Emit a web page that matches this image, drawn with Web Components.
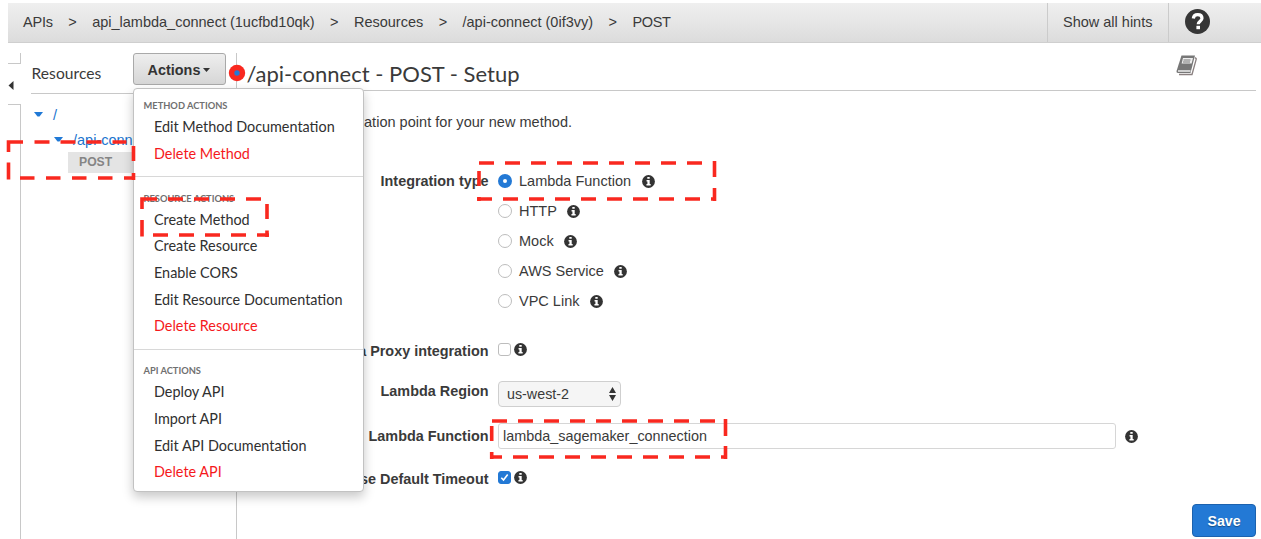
<!DOCTYPE html>
<html lang="en">
<head>
<meta charset="utf-8">
<title>API Gateway - Method Setup</title>
<style>
html, body { margin: 0; height: 100%; overflow: hidden; background: #fff; }
body { font: 14.5px/20px "Liberation Sans", Arial, sans-serif; color: #3a3a3a; }
</style>
</head>
<body>
<gateway-app></gateway-app>
<script>
function define(name, html, setup) {
  const template = document.createElement('template');
  template.innerHTML = html;
  customElements.define(name, class extends HTMLElement {
    connectedCallback() {
      if (this.shadowRoot) return;
      const root = this.attachShadow({ mode: 'open' });
      root.append(template.content.cloneNode(true));
      if (setup) setup(this, root);
    }
  });
}

define('info-icon', `
<style>:host{display:block;width:13px;height:13px;flex:none} svg{display:block}</style>
<svg width="13" height="13" viewBox="0 0 12 12"><circle cx="6" cy="6" r="5.900" fill="#333"/>
<path d="M4.9 1.8h2.2v1.7H4.9zM4.2 4.6h2.9v3.7h.9v1.4H4.1V8.3H5V6h-.8z" fill="#fff"/></svg>`);

define('crumb-bar', `
<style>
:host{display:flex;box-sizing:border-box;height:40px;margin:3px 0 0 8px;border-bottom:1px solid #cfcfcf;background:linear-gradient(#efefef,#e7e7e7 45%,#dcdcdc)}
nav{display:flex;flex:1;padding:8.500px 0 0 15px;white-space:pre}
.sep{width:39.300px;text-align:center}
.hints{box-sizing:border-box;width:122px;padding:8.500px 0 0 15px;border-left:1px solid #cbcbcb;border-right:1px solid #cbcbcb;white-space:nowrap}
.help{width:92px;padding:5.5px 0 0 16px;box-sizing:border-box}
svg{display:block}
</style>
<nav><span style="letter-spacing:-.2px">APIs</span><span class="sep">&gt;</span><span>api_lambda_connect (1ucfbd10qk)</span><span class="sep">&gt;</span><span>Resources</span><span class="sep">&gt;</span><span>/api-connect (0if3vy)</span><span class="sep">&gt;</span><span style="letter-spacing:-.3px">POST</span></nav>
<div class="hints">Show all hints</div>
<div class="help"><svg width="25" height="25" viewBox="0 0 25 25"><circle cx="12.5" cy="12.5" r="12.5" fill="#363636"/><path d="M8.3 9.5C8.6 6.8 10.3 5.600 12.700 5.600c2.600 0 4.300 1.400 4.300 3.600 0 3-3.800 3-3.800 6" fill="none" stroke="#fff" stroke-width="3.200"/><rect x="11.400" y="16.800" width="3.600" height="3.400" fill="#fff"/></svg></div>`);

define('collapse-rail', `
<style>
:host{display:flex;flex-direction:column;width:13px;flex:none}
.top,.bottom{box-sizing:border-box;border-right:1px solid #c8c8c8}
.top{height:11px;border-bottom:1px solid #c8c8c8}
.toggle{height:40px;padding-top:17px;box-sizing:border-box}
.bottom{flex:1;border-top:1px solid #c8c8c8}
svg{display:block}
</style>
<div class="top"></div><div class="toggle"><svg width="6" height="9"><path d="M5.500 0v9L.5 4.500z" fill="#333"/></svg></div><div class="bottom"></div>`);

define('tree-row', `
<style>:host{display:flex;align-items:center;height:25px;color:#1b74ce;white-space:nowrap} svg{flex:none;margin-right:10px}</style>
<svg width="9" height="5"><path d="M0 0h9L5.500 4.600h-2z" fill="#2079d6"/></svg><slot></slot>`);

define('resource-panel', `
<style>
:host{display:block;width:205px;margin-left:10px;flex:none;overflow:hidden}
header{box-sizing:border-box;height:41px;padding:10px 0 0 .5px;border-bottom:1px solid #c8c8c8;font:15.600px/20px Lato,sans-serif;letter-spacing:.05px}
.tree{padding:8px 0 0 3px}
.node2{margin-left:20px}
.method{box-sizing:border-box;margin:0 0 0 34px;height:21px;padding:0 0 0 11px;font:bold 12.200px/20px "Liberation Sans",Arial,sans-serif;color:#858585;background:#e4e4e4}
</style>
<header>Resources</header>
<div class="tree"><tree-row>/</tree-row><tree-row class="node2">/api-connect</tree-row><div class="method">POST</div></div>`);

define('radio-option', `
<style>
:host{display:flex;align-items:center;height:30px;white-space:nowrap}
i{box-sizing:border-box;width:14px;height:14px;border:1px solid #bdbdbd;border-radius:50%;margin-right:7px;background:#fff}
:host([checked]) i{border:5px solid #2379d5}
info-icon{margin-left:10.500px}
</style><i></i><span><slot></slot></span><info-icon></info-icon>`);

define('check-box', `
<style>
:host{display:flex;align-items:center;gap:3px;height:16px}
span{box-sizing:border-box;width:13px;height:13px;border:1px solid #bdbdbd;border-radius:3px;background:#fff}
svg{display:none}
:host([checked]) span{background:#2379d5;border-color:#2379d5}
:host([checked]) svg{display:block}
</style><span><svg width="11" height="11" viewBox="0 0 11 11"><path d="M2.300 5.700 4.500 8 8.700 2.500" fill="none" stroke="#fff" stroke-width="1.600"/></svg></span><info-icon></info-icon>`);

define('form-row', `
<style>
:host{display:grid;grid-template-columns:251.500px 1fr;column-gap:9.500px;align-items:start}
.label{text-align:right;font-weight:bold;font-size:14.400px;white-space:nowrap}
:host([boxed]) .label{padding-top:3px}
</style><div class="label"><slot name="label"></slot></div><slot></slot>`);

define('setup-form', `
<style>
:host{display:block;flex:1;min-width:0;border-left:1px solid #c8c8c8;position:relative}
header{display:flex;justify-content:space-between;box-sizing:border-box;height:38px;margin-right:5px;padding-left:9.500px;border-bottom:1px solid #c8c8c8;font:22px/41px Lato,sans-serif}
header svg{margin:1px 58px 0 0}
p{margin:20.500px 0 0 12px;white-space:nowrap;letter-spacing:.03px}
.types{margin-top:-5px}
.type-row{margin-top:39.500px}
.proxy{margin-top:25px}
.region{margin-top:20px}
.func{margin-top:16px}
.time{margin-top:20px}
.select{box-sizing:border-box;width:123px;height:26px;display:flex;align-items:center;justify-content:space-between;padding:0 4px 0 8px;border:1px solid #cfcfcf;border-radius:4px;background:#f5f5f5;font-size:14.300px}
.input-line{display:flex;align-items:center;gap:9px}
.input{box-sizing:border-box;width:618px;height:26px;padding:2px 4px;border:1px solid #d6d6d6;border-radius:3px;font-size:14.400px}
.actions{display:flex;justify-content:flex-end;margin:15px 5px 0 0}
button{box-sizing:border-box;width:64px;height:33px;border:1px solid #1c62ae;border-radius:4px;background:#2379d5;color:#fff;font:bold 14.200px/20px "Liberation Sans",Arial,sans-serif;padding:0;text-shadow:0 1px 1px #174c85}
</style>
<header><span>/api-connect - POST - Setup</span>
<svg width="23" height="23" viewBox="0 0 23 23"><path d="M6.500 1.500h13.500L15.500 19H3.200Q1 19 1.700 16.500z" fill="#777"/><path d="M20.200 3.500 21.300 5 17 20.500H4" fill="none" stroke="#8a8080" stroke-width="1.300"/><path d="M8 4h10l-1.400 5.500H6.600z" fill="#eee"/><path d="M8.500 6h7M8 8h7" stroke="#777"/><path d="M3 17h12.500" stroke="#eee" stroke-width="1.500"/></svg></header>
<p>Choose the integration point for your new method.</p>
<form-row class="type-row"><span slot="label">Integration type</span><div class="types"><radio-option checked>Lambda Function</radio-option><radio-option>HTTP</radio-option><radio-option>Mock</radio-option><radio-option>AWS Service</radio-option><radio-option>VPC Link</radio-option></div></form-row>
<form-row class="proxy"><span slot="label">Use Lambda Proxy integration</span><check-box></check-box></form-row>
<form-row class="region"><span slot="label">Lambda Region</span><div class="select"><span>us-west-2</span><svg width="7" height="14"><path d="M0 6 3.500 0 7 6zM0 8h7L3.500 14z" fill="#333"/></svg></div></form-row>
<form-row class="func" boxed><span slot="label">Lambda Function</span><div class="input-line"><div class="input">lambda_sagemaker_connection</div><info-icon></info-icon></div></form-row>
<form-row class="time"><span slot="label">Use Default Timeout</span><check-box checked></check-box></form-row>
<div class="actions"><button>Save</button></div>`);

define('menu-item', `
<style>:host{display:block;height:26.700px;padding-left:20.500px;font:14.400px/26.700px Lato,sans-serif;color:#303030;white-space:nowrap} :host([danger]){color:#f5191c}</style><slot></slot>`);

define('menu-group', `
<style>
:host{display:block;padding-bottom:8.800px}
:host(:not(:first-child)){border-top:1px solid #d8d8d8;padding-top:13.400px}
h3{margin:0;padding-left:10px;font:bold 9.300px/16px Lato,sans-serif;color:#707070}
</style><h3></h3><slot></slot>`, (el, root) => { root.querySelector('h3').textContent = el.getAttribute('heading'); });

define('actions-menu', `
<style>
:host{position:absolute;left:132.500px;top:53px;width:232px;z-index:2}
button{display:flex;align-items:center;justify-content:center;gap:3px;box-sizing:border-box;width:93px;height:32px;padding:1px 0 0;border:1px solid #a9a9a9;border-radius:3px;background:linear-gradient(#eee,#d6d6d6);color:#333;font:bold 14.400px/20px "Liberation Sans",Arial,sans-serif}
.menu{box-sizing:border-box;width:231.500px;height:404px;margin-top:3px;padding-top:9px;border:1px solid #c2c2c2;border-radius:4px;background:#fff;box-shadow:0 5px 11px rgba(0,0,0,.22)}
</style>
<button>Actions<svg width="7" height="4"><path d="M0 0h7L3.500 4z" fill="#333"/></svg></button>
<div class="menu">
<menu-group heading="METHOD ACTIONS"><menu-item>Edit Method Documentation</menu-item><menu-item danger>Delete Method</menu-item></menu-group>
<menu-group heading="RESOURCE ACTIONS"><menu-item>Create Method</menu-item><menu-item>Create Resource</menu-item><menu-item>Enable CORS</menu-item><menu-item>Edit Resource Documentation</menu-item><menu-item danger>Delete Resource</menu-item></menu-group>
<menu-group heading="API ACTIONS"><menu-item>Deploy API</menu-item><menu-item>Import API</menu-item><menu-item>Edit API Documentation</menu-item><menu-item danger>Delete API</menu-item></menu-group>
</div>`);

define('callout-layer', `
<style>:host{position:absolute;inset:0;z-index:3;pointer-events:none} svg{display:block}</style>
<svg width="1261" height="539" fill="none" stroke="#f9281f" stroke-width="3.600">
<path d="M8.500 152V142H23M34.500 142h15M60.500 142h15M86.500 142h15M112.500 142h14M8.500 162.500v17M133.500 146v15M133.500 173v7M20 178h14.500M46 178h14.500M72 178h14.500M98 178h14.500M124 178h11"/>
<path d="M142 209V199H157M168 199h15M194 199h15M220 199h15M246 199h15M142 220v16.500M267 204v15M267 230.500v6.500M153 235h15M179 235h15M205 235h15M231 235h15M257 235h12"/>
<path d="M479 163H702" stroke-dasharray="15 11"/><path d="M714.500 161v16M714.500 188v13M479 171v15M479 197v4M711 199h5"/><path d="M477 199H701" stroke-dasharray="15 11"/>
<path d="M492 421H715" stroke-dasharray="15 11"/><path d="M725.500 419v17M725.500 446v13M491.700 426v15M491.700 452v7M490 457h12M721 457h6"/><path d="M513 457H711" stroke-dasharray="15 11"/>
<circle cx="237" cy="73" r="8.200" fill="#f9281f" stroke="none"/><circle cx="237" cy="73" r="2.700" fill="#2379d5" stroke="none"/>
</svg>`);

define('gateway-app', `
<style>
:host{display:flex;flex-direction:column;position:relative;height:539px;overflow:hidden}
crumb-bar{flex:none}
main{display:flex;flex:1;margin:10px 0 0 8px}
</style>
<crumb-bar></crumb-bar>
<main><collapse-rail></collapse-rail><resource-panel></resource-panel><setup-form></setup-form></main>
<actions-menu></actions-menu>
<callout-layer></callout-layer>`);
</script>
</body>
</html>
